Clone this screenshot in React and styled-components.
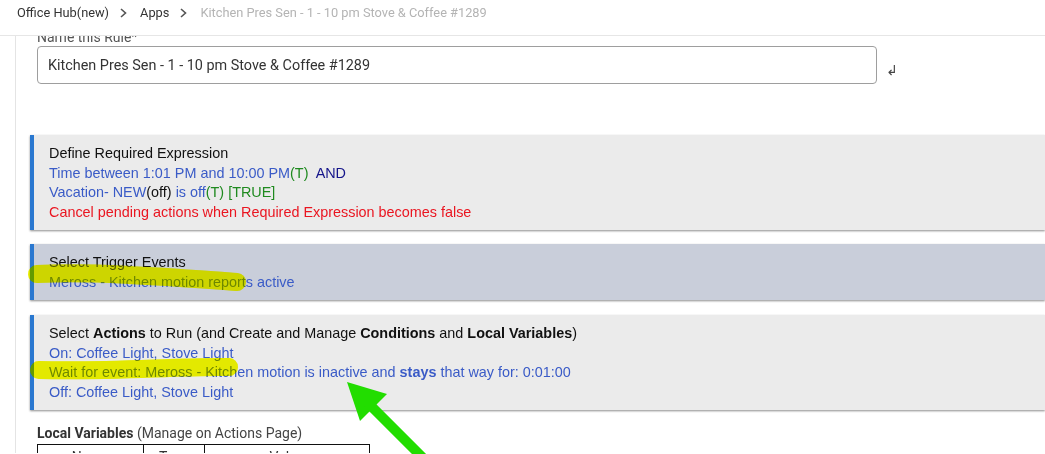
import React from 'react';
import styled, { createGlobalStyle } from 'styled-components';

const GlobalStyle = createGlobalStyle`
  html,
  body {
    margin: 0;
    padding: 0;
    background: #fff;
  }

  body {
    width: 1045px;
    height: 454px;
    overflow: hidden;
  }
`;

const Page = styled.div`
  position: relative;
  width: 1045px;
  height: 454px;
  overflow: hidden;
  font-family: Roboto, 'Liberation Sans', sans-serif;
  color: #333;
`;

const TopBar = styled.nav`
  display: flex;
  align-items: flex-start;
  height: 36px;
  padding: 5px 0 0 17px;
  box-sizing: border-box;
  border-bottom: 1px solid #e6e6e6;
  font-size: 12.8px;
  line-height: 16px;
`;

const Crumb = styled.span`
  color: ${({ $current }) => ($current ? '#b4b4b4' : '#333')};
`;

const Sep = styled.svg`
  flex-shrink: 0;
  margin: 3px 13px 0 11px;
`;

const Chevron = () => (
  <Sep width="7" height="10" viewBox="0 0 7 10">
    <polyline points="1,1 5.5,5 1,9" fill="none" stroke="#555" strokeWidth="1.6" />
  </Sep>
);

const Body = styled.div`
  display: flex;
  height: 417px;
  overflow: hidden;
`;

const Rail = styled.aside`
  flex-shrink: 0;
  width: 15px;
  border-right: 1px solid #e4e4e4;
`;

const Main = styled.main`
  flex: 1;
  min-width: 0;
  padding-left: 14px;
  overflow: hidden;
`;

const FieldLabel = styled.div`
  margin: -7px 0 0 7px;
  font-size: 14px;
  line-height: 16px;
  color: #555;
`;

const FieldRow = styled.div`
  display: flex;
  align-items: center;
  margin: 1px 0 0 7px;
`;

const NameInput = styled.div`
  display: flex;
  align-items: center;
  width: 840px;
  height: 38px;
  box-sizing: border-box;
  padding: 1px 10px 0 10px;
  border: 1px solid #9e9e9e;
  border-radius: 4px;
  font-size: 14.4px;
  color: #333;
`;

const ReturnMark = styled.span`
  margin: 9px 0 0 9px;
  font-family: 'DejaVu Sans', sans-serif;
  font-size: 14px;
  color: #444;
`;

const Section = styled.section`
  margin-top: ${({ $gap }) => $gap}px;
  padding: 9px 0 8px 15px;
  border-left: 4px solid #2a78d0;
  background: ${({ $tone }) => ($tone === 'blue' ? '#c9ceda' : '#ebebeb')};
  box-shadow: 0 1px 2px rgba(0, 0, 0, 0.45);
  font-family: 'Liberation Sans', Arial, sans-serif;
  font-size: 14.4px;
  line-height: 19.5px;
  color: #111;
`;

const Line = styled.div`
  color: ${({ $c }) => $c || '#3a5bc7'};
  white-space: nowrap;
`;

const Tone = styled.span`
  color: ${({ $c }) => $c};
  font-weight: ${({ $bold }) => ($bold ? 700 : 400)};
`;

const VarsLabel = styled.div`
  margin: 15px 0 0 7px;
  font-size: 14px;
  line-height: 16px;
  color: #444;

  b {
    color: #333;
    font-weight: 700;
  }
`;

const VarsTable = styled.table`
  margin: 3px 0 0 7px;
  border-collapse: collapse;
  font-size: 14px;

  th {
    height: 24px;
    padding: 0;
    border: 1px solid #111;
    font-weight: 400;
    color: #333;
  }
`;

const Marks = styled.svg`
  position: absolute;
  left: 0;
  top: 0;
  pointer-events: none;
  mix-blend-mode: ${({ $blend }) => $blend || 'normal'};
`;

const strokes = [
  'M 37 274 C 100 271, 180 278, 237 282',
  'M 39 370 C 110 372, 180 366, 229 367',
];

const App = () => (
  <Page>
    <GlobalStyle />
    <TopBar>
      <Crumb>Office Hub(new)</Crumb>
      <Chevron />
      <Crumb>Apps</Crumb>
      <Chevron />
      <Crumb $current>Kitchen Pres Sen - 1 - 10 pm Stove &amp; Coffee #1289</Crumb>
    </TopBar>

    <Body>
      <Rail />
      <Main>
        <FieldLabel>Name this Rule*</FieldLabel>
        <FieldRow>
          <NameInput>Kitchen Pres Sen - 1 - 10 pm Stove &amp; Coffee #1289</NameInput>
          <ReturnMark>↲</ReturnMark>
        </FieldRow>

        <Section $gap={51}>
          <div>Define Required Expression</div>
          <Line>
            Time between 1:01 PM and 10:00 PM<Tone $c="#1f8a1f">(T)</Tone>&nbsp; <Tone $c="#14148a">AND</Tone>
          </Line>
          <Line>
            Vacation- NEW<Tone $c="#111">(off)</Tone> is off<Tone $c="#1f8a1f">(T) [TRUE]</Tone>
          </Line>
          <Line $c="#ea1520">Cancel pending actions when Required Expression becomes false</Line>
        </Section>

        <Section $gap={14} $tone="blue">
          <div>Select Trigger Events</div>
          <Line>Meross - Kitchen motion reports active</Line>
        </Section>

        <Section $gap={15}>
          <div>
            Select <b>Actions</b> to Run (and Create and Manage <b>Conditions</b> and <b>Local Variables</b>)
          </div>
          <Line>On: Coffee Light, Stove Light</Line>
          <Line>
            Wait for event: Meross - Kitchen motion is inactive and <Tone $bold>stays</Tone> that way for: 0:01:00
          </Line>
          <Line>Off: Coffee Light, Stove Light</Line>
        </Section>

        <VarsLabel>
          <b>Local Variables</b> (Manage on Actions Page)
        </VarsLabel>
        <VarsTable>
          <thead>
            <tr>
              <th style={{ width: 105 }}>Name</th>
              <th style={{ width: 60 }}>Type</th>
              <th style={{ width: 164 }}>Value</th>
            </tr>
          </thead>
        </VarsTable>
      </Main>
    </Body>

    <Marks width="1045" height="454" $blend="multiply">
      {strokes.map(d => (
        <path key={d} d={d} fill="none" stroke="#f2f800" strokeWidth="18" strokeLinecap="round" />
      ))}
    </Marks>
    <Marks width="1045" height="454">
      {strokes.map(d => (
        <path key={d} d={d} fill="none" stroke="#eef400" strokeWidth="18" strokeLinecap="round" opacity="0.3" />
      ))}
      <polygon points="347,382 387,394 360,421" fill="#22dd00" />
      <line x1="368" y1="403" x2="424" y2="459" stroke="#22dd00" strokeWidth="10" />
    </Marks>
  </Page>
);

export default App;
